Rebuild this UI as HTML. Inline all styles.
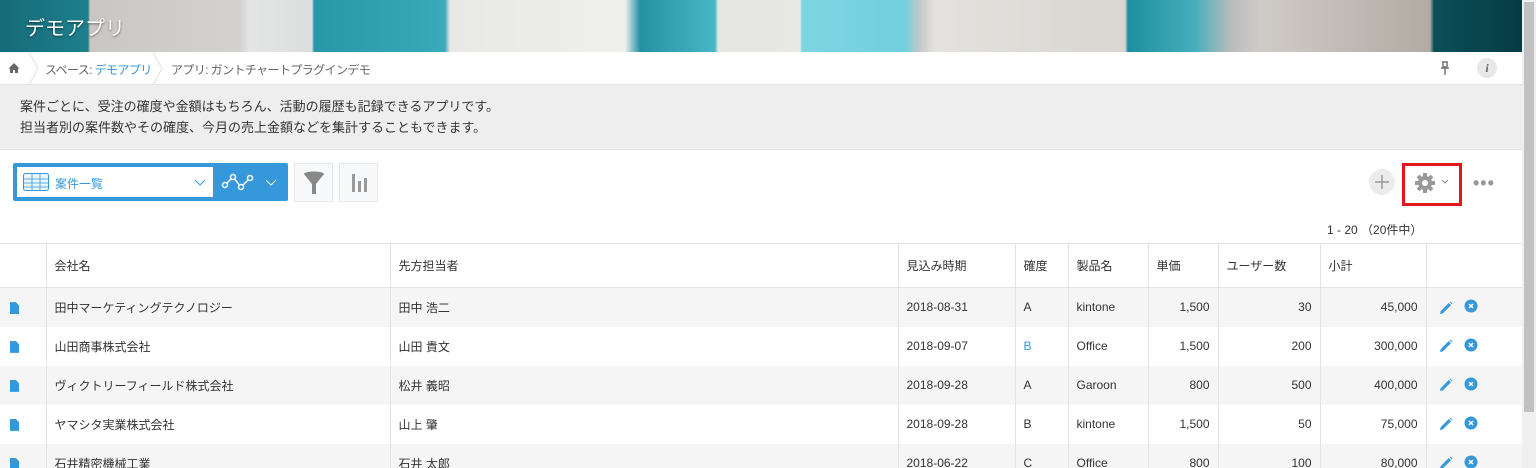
<!DOCTYPE html>
<html><head><meta charset="utf-8"><style>
*{box-sizing:border-box;margin:0;padding:0}
html,body{width:1536px;height:468px;overflow:hidden}
body{background:#fff;font-family:"Liberation Sans","Noto Sans CJK JP",sans-serif;color:#333;position:relative;font-size:12px}
.banner{position:absolute;left:0;top:0;width:1522px;height:52px;background:linear-gradient(90deg,#156b78 0,#1e7f8c 88px,#c9c7c3 90px,#d4d2ce 240px,#e4e5e5 250px,#dcdedd 312px,#2897a8 314px,#3aaabb 445px,#e8e8e6 450px,#efefed 625px,#2592a4 640px,#47b6c5 715px,#e5e5e3 718px,#e8e8e6 800px,#7dd5e2 802px,#72cfdc 905px,#c4c9ca 920px,#e4e2de 935px,#d9d6d1 1125px,#1e8fa0 1128px,#45aebb 1195px,#b8bcbc 1230px,#cfcbc6 1260px,#b2aba4 1430px,#0a4f58 1434px,#063c44 1522px)}
.banner .t{position:absolute;left:25px;top:12px;font-size:20px;color:#fff;text-shadow:0 1px 2px rgba(0,0,0,.5)}
.sb{position:absolute;left:1522px;top:0;width:14px;height:468px;background:#f0f0f0}
.sb div{position:absolute;left:2px;top:2px;width:10px;height:410px;background:#c1c1c1}
.bc{position:absolute;top:52px;left:0;width:1522px;height:33px;background:#fff;border-bottom:1px solid #e3e3e3;font-size:12px;color:#666}
.bc span{position:absolute;top:9px;letter-spacing:-0.6px}
.desc{position:absolute;top:85px;left:0;width:1522px;height:65px;background:#eee;border-bottom:1px solid #e3e3e3;font-size:13px;line-height:21px;padding:11px 0 0 20px;color:#333}
.vbox{position:absolute;left:13px;top:163px;width:275px;height:38px;background:#3498db;border-radius:2px}
.vin{position:absolute;left:4px;top:4px;width:196px;height:30px;background:#fff}
.btn{position:absolute;top:163px;width:39px;height:39px;background:#f7f9fa;border:1px solid #e3e7e8}
table{position:absolute;left:0;top:243px;border-collapse:collapse;width:1522px;font-size:12px}
td{height:39px;border-left:1px solid #e3e3e3;padding:0 8px;color:#333}
tr.h td{height:44px;border-top:1px solid #e3e3e3;border-bottom:1px solid #e3e3e3}
tr:nth-child(2n) td{background:#f5f5f5}
td.r{text-align:right}
td:first-child{border-left:none;padding-left:10px}
.doc{display:inline-block;width:9px;height:12px;background:#3498db;clip-path:polygon(0 0,65% 0,100% 30%,100% 100%,0 100%);vertical-align:middle}
.ic{padding-left:12px}
.ic svg{vertical-align:middle}
</style></head><body>
<div class="banner"><div class="t">デモアプリ</div></div>
<div class="bc">
<svg style="position:absolute;left:8px;top:10px" width="12" height="12" viewBox="0 0 12 12"><path d="M6 1L0.5 6.5H2V11H5V8H7V11H10V6.5H11.5Z" fill="#666"/></svg>
<svg style="position:absolute;left:28px;top:0" width="12" height="33"><path d="M1 0L10 16.5L1 33" fill="none" stroke="#e0e0e0"/></svg>
<span style="left:45px">スペース: <span style="position:static;color:#3498db">デモアプリ</span></span>
<svg style="position:absolute;left:152px;top:0" width="12" height="33"><path d="M1 0L10 16.5L1 33" fill="none" stroke="#e0e0e0"/></svg>
<span style="left:171px">アプリ: ガントチャートプラグインデモ</span>
<svg style="position:absolute;left:1440px;top:9px" width="10" height="14"><path d="M2 1H8M3 1V6H7V1M1 7H9M5 7V14" stroke="#777" stroke-width="1.5" fill="none"/></svg>
<div style="position:absolute;left:1477px;top:6px;width:20px;height:20px;border-radius:50%;background:#e8e8e8;text-align:center;font:italic bold 12px/20px 'Liberation Serif',serif;color:#666">i</div>
</div>
<div class="desc">案件ごとに、受注の確度や金額はもちろん、活動の履歴も記録できるアプリです。<br>担当者別の案件数やその確度、今月の売上金額などを集計することもできます。</div>
<div class="vbox"><div class="vin">
<svg style="position:absolute;left:6px;top:6px" width="26" height="18"><rect x="0.5" y="0.5" width="25" height="17" rx="2" fill="#eaf4fb" stroke="#3498db"/><path d="M1 6H25M1 10H25M1 14H25M9 1V17M17 1V17" stroke="#3498db" stroke-width="0.8"/></svg>
<span style="position:absolute;left:38px;top:8px;font-size:12px;color:#3498db">案件一覧</span>
<svg style="position:absolute;left:177px;top:12px" width="12" height="8"><path d="M1 1L6 6L11 1" stroke="#3498db" fill="none"/></svg>
</div>
<svg style="position:absolute;left:208px;top:9px" width="34" height="20"><path d="M4 13L12 5L20 15L29 6" stroke="#fff" stroke-width="1.5" fill="none"/><g fill="#3498db" stroke="#fff" stroke-width="1.5"><circle cx="4" cy="13" r="2.5"/><circle cx="12" cy="5" r="2.5"/><circle cx="20" cy="15" r="2.5"/><circle cx="29" cy="6" r="2.5"/></g></svg>
<svg style="position:absolute;left:252px;top:16px" width="12" height="8"><path d="M1 1L6 6L11 1" stroke="#fff" fill="none"/></svg>
</div>
<div class="btn" style="left:294px"><svg style="position:absolute;left:8px;top:7px" width="22" height="24"><ellipse cx="11" cy="3" rx="10" ry="2.5" fill="#888"/><path d="M1 3L9 13V23H13V13L21 3Z" fill="#888"/></svg></div>
<div class="btn" style="left:339px"><svg style="position:absolute;left:12px;top:10px" width="16" height="20"><rect x="0" y="0" width="3" height="18" fill="#999"/><rect x="6" y="7" width="3" height="11" fill="#999"/><rect x="12" y="4" width="3" height="14" fill="#999"/></svg></div>
<div style="position:absolute;left:1369px;top:169px;width:26px;height:26px;border-radius:50%;background:#ececec"><svg width="26" height="26"><path d="M13 6V20M6 13H20" stroke="#999" stroke-width="1.5"/></svg></div>
<div style="position:absolute;left:1402px;top:163px;width:60px;height:43px;border:3px solid #e3161c"></div>
<svg style="position:absolute;left:1414px;top:172px" width="22" height="22" viewBox="0 0 22 22"><g fill="#999"><circle cx="11" cy="11" r="7"/><g stroke="#999" stroke-width="4"><path d="M11 1V21M1 11H21M4 4L18 18M18 4L4 18"/></g></g><circle cx="11" cy="11" r="3" fill="#fff"/></svg>
<svg style="position:absolute;left:1441px;top:179px" width="8" height="6"><path d="M1 1L4 4L7 1" stroke="#888" fill="none"/></svg>
<div style="position:absolute;left:1473px;top:173px;font-size:18px;color:#999;letter-spacing:1px;font-weight:bold">•••</div>
<div style="position:absolute;left:1327px;top:221px;font-size:12px;color:#333">1 - 20 （20件中）</div>
<table>
<colgroup><col style="width:46px"><col style="width:344px"><col style="width:508px"><col style="width:117px"><col style="width:53px"><col style="width:80px"><col style="width:70px"><col style="width:102px"><col style="width:106px"><col style="width:96px"></colgroup>
<tr class="h"><td></td><td>会社名</td><td>先方担当者</td><td>見込み時期</td><td>確度</td><td>製品名</td><td>単価</td><td>ユーザー数</td><td>小計</td><td></td></tr>
<tr><td><span class="doc"></span></td><td>田中マーケティングテクノロジー</td><td>田中 浩二</td><td>2018-08-31</td><td>A</td><td>kintone</td><td class="r">1,500</td><td class="r">30</td><td class="r">45,000</td><td class="ic">PI</td></tr>
<tr><td><span class="doc"></span></td><td>山田商事株式会社</td><td>山田 貴文</td><td>2018-09-07</td><td style="color:#3498db">B</td><td>Office</td><td class="r">1,500</td><td class="r">200</td><td class="r">300,000</td><td class="ic">PI</td></tr>
<tr><td><span class="doc"></span></td><td>ヴィクトリーフィールド株式会社</td><td>松井 義昭</td><td>2018-09-28</td><td>A</td><td>Garoon</td><td class="r">800</td><td class="r">500</td><td class="r">400,000</td><td class="ic">PI</td></tr>
<tr><td><span class="doc"></span></td><td>ヤマシタ実業株式会社</td><td>山上 肇</td><td>2018-09-28</td><td>B</td><td>kintone</td><td class="r">1,500</td><td class="r">50</td><td class="r">75,000</td><td class="ic">PI</td></tr>
<tr><td><span class="doc"></span></td><td>石井精密機械工業</td><td>石井 太郎</td><td>2018-06-22</td><td>C</td><td>Office</td><td class="r">800</td><td class="r">100</td><td class="r">80,000</td><td class="ic">PI</td></tr>
</table>
<script>
document.querySelectorAll('td.ic').forEach(function(t){t.innerHTML='<svg width="14" height="14" viewBox="0 0 14 14"><path d="M1 13L1.6 10.2L9.8 2L12 4.2L3.8 12.4Z" fill="#3498db"/><path d="M10.6 1.2L11.4 0.6L13.4 2.6L12.8 3.4Z" fill="#3498db"/></svg><svg style="margin-left:11px;margin-top:-3px" width="14" height="14" viewBox="0 0 14 14"><circle cx="7" cy="7" r="6.5" fill="#3498db"/><path d="M5 5L9 9M9 5L5 9" stroke="#fff" stroke-width="1.5"/></svg>';});
</script>
<div class="sb"><div></div></div>
</body></html>
